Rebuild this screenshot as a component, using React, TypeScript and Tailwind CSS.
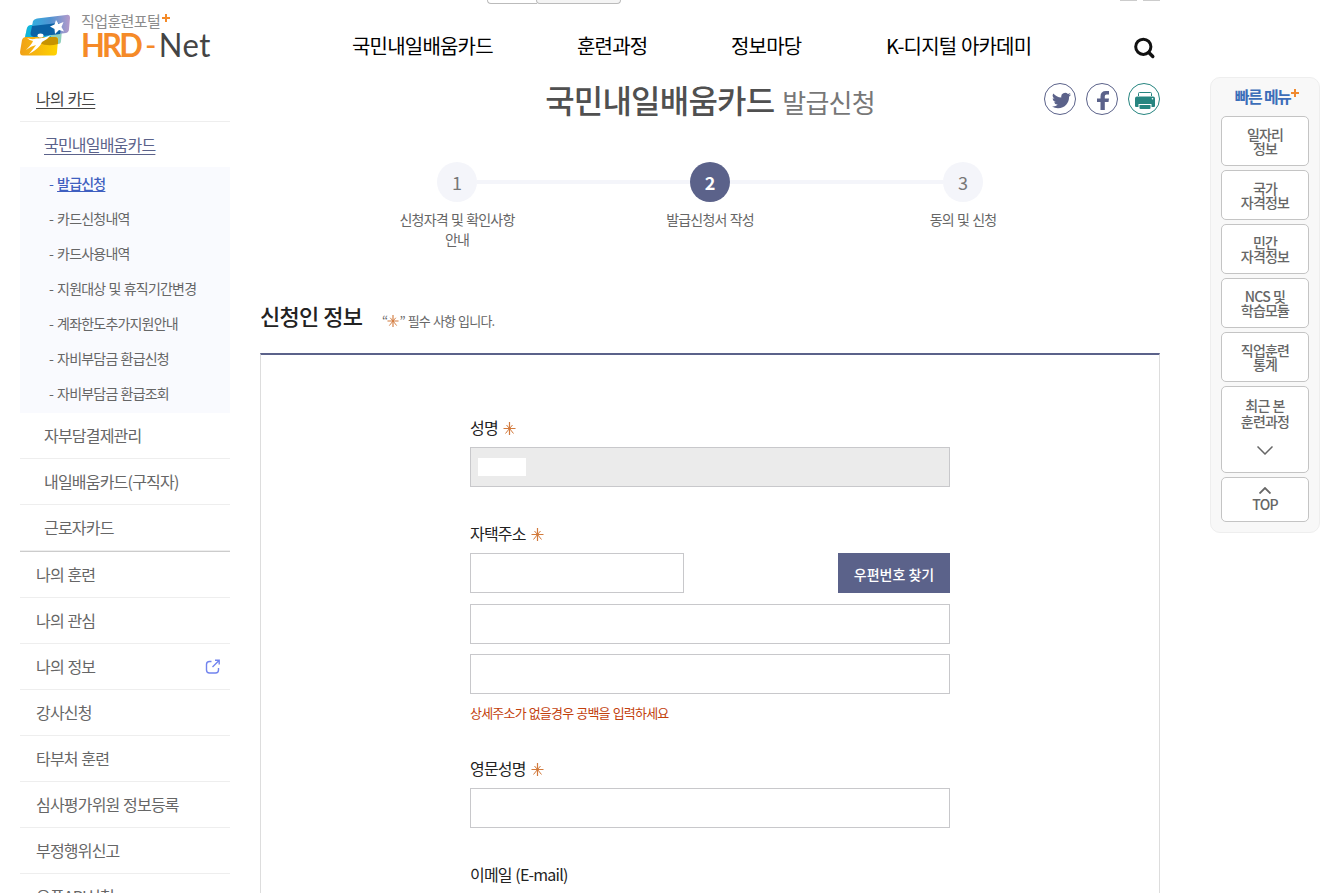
import React from "react";

const subMenu = [
  "발급신청",
  "카드신청내역",
  "카드사용내역",
  "지원대상 및 휴직기간변경",
  "계좌한도추가지원안내",
  "자비부담금 환급신청",
  "자비부담금 환급조회",
];

const cardMenu = ["자부담결제관리", "내일배움카드(구직자)", "근로자카드"];

const mainMenu = [
  { label: "나의 훈련" },
  { label: "나의 관심" },
  { label: "나의 정보", external: true },
  { label: "강사신청" },
  { label: "타부처 훈련" },
  { label: "심사평가위원 정보등록" },
  { label: "부정행위신고" },
  { label: "오픈API신청" },
];

const quickLinks = [
  ["일자리", "정보"],
  ["국가", "자격정보"],
  ["민간", "자격정보"],
  ["NCS 및", "학습모듈"],
  ["직업훈련", "통계"],
];

export default function App() {
  return (
    <div className="relative h-[893px] w-[1343px] overflow-hidden bg-white font-['Noto_Sans_CJK_KR','Noto_Sans',sans-serif] tracking-[-0.8px] text-[#666] [word-spacing:0.8px]">
      <TopTabs />
      <Header />
      <div className="flex items-start">
        <Sidebar />
        <Main />
        <QuickMenu />
      </div>
    </div>
  );
}

// bottom edge of the utility bar above the header
function TopTabs() {
  return (
    <>
      <div className="absolute left-[487px] top-0 flex h-1">
        <div className="w-[50px] rounded-bl border-b border-l border-[#bbb]" />
        <div className="-ml-px w-[85px] rounded-b border border-t-0 border-[#bbb] bg-[#f4f4f4]" />
      </div>
      <div className="absolute left-[1120px] top-0 flex gap-1.5">
        <div className="h-px w-[17px] bg-[#ccc]" />
        <div className="h-px w-[17px] bg-[#ccc]" />
      </div>
    </>
  );
}

function Header() {
  return (
    <header className="flex h-[77px] items-start pl-5 text-black">
      <Logo />
      <nav className="flex whitespace-nowrap pt-8 text-xl leading-7">
        <a className="ml-[141px] w-[225px]">국민내일배움카드</a>
        <a className="w-[154px]">훈련과정</a>
        <a className="w-[155px]">정보마당</a>
        <a className="w-[247px]">K-디지털 아카데미</a>
      </nav>
      <svg className="mt-9 h-6 w-6" viewBox="0 0 24 24" fill="none" stroke="#111" strokeWidth="3">
        <circle cx="10.3" cy="10.8" r="7.6" />
        <path d="M15.800 16.500l4 4" strokeLinecap="round" strokeWidth="3.4" />
      </svg>
    </header>
  );
}

function Logo() {
  return (
    <div className="relative flex h-[60px] w-[191px] shrink-0">
      <svg className="mt-3.5 h-[43px] w-[51px] shrink-0" viewBox="0 0 51 43">
        <defs>
          <linearGradient id="sky" x1="0" y1="0" x2="1" y2="0">
            <stop offset="0" stopColor="#2fb0e0" />
            <stop offset=".5" stopColor="#4f93d2" />
            <stop offset="1" stopColor="#b79aca" />
          </linearGradient>
          <linearGradient id="sun" x1="0" y1="0" x2="1" y2="0">
            <stop offset="0" stopColor="#f0a018" />
            <stop offset="1" stopColor="#ffd400" />
          </linearGradient>
        </defs>
        <path d="M7 14Q8 12 11 12L40 10Q43 12 42 16L41 27Q41 30 38 30L8 31Q4 31 4 28Z" fill="#8fd0bb" />
        <path d="M7 14Q8 11 11 11L28 9 32 28H4Z" fill="#11b5dc" />
        <path d="M13 7Q14 5 17 4.500L46 1Q50 0 50 4L49 15Q49 18 46 19L14 23Q9 22 11 17Z" fill="url(#sky)" />
        <path d="M12 12L38 9Q42 10 41 14L40 20 14 23Q9 22 11 17Z" fill="#0b62a5" />
        <path d="M2 26Q3 23 6 23L35 23Q38 23 38 26L37 38Q37 41.500 34 41.500H3Q0 41.500 0 38Z" fill="url(#sun)" />
        <path d="M18 23H35Q38 23 38 26V30Q28 33 19 29Z" fill="#c79300" />
        <path d="M36 6l2.500 4 5-2-2 5 2.500 4.500-5-1.500-4 4-.5-5-4.500-2.500 4.500-2z" fill="#fff" />
        <ellipse cx="20.500" cy="21.500" rx="3" ry="2" fill="#fff" />
        <path d="M7 24Q12 26 16 24.500Q22 25 31 21Q27 26 22 28Q20 34 9 40Q14 34 16 31Q11 32 6 36Q12 30 13 27Q10 27 7 24Z" fill="#fff" />
      </svg>
      <div className="ml-2.5 whitespace-nowrap">
        <div className="mt-[11px] text-[15px] leading-5 tracking-[-0.6px] text-[#8c8c8c]">직업훈련포털</div>
        <div className="-mt-[5px] flex origin-left scale-y-105 font-[Lato] text-[31px] leading-9">
          <b className="tracking-[-2.8px] text-[#f58a28]">HRD</b>
          <span className="ml-[5px] text-[#f58a28]">-</span>
          <span className="ml-[3px] tracking-[0.6px] text-[#444]">Net</span>
        </div>
      </div>
      <svg className="absolute left-[142px] top-3.5 h-2 w-2" viewBox="0 0 8 8" stroke="#f58a28" strokeWidth="2">
        <path d="M4 0v8M0 4h8" />
      </svg>
    </div>
  );
}

function Sidebar() {
  return (
    <aside className="ml-5 w-[210px] shrink-0 text-base">
      <div className="h-[45px] border-b border-[#eee] pl-4 leading-[43px] text-[#444] underline underline-offset-3">
        나의 카드
      </div>
      <div className="h-[45px] pl-6 leading-[45px] text-[#5b628a] underline underline-offset-3">국민내일배움카드</div>
      <ul className="h-[246px] bg-[#f9fafe] text-sm">
        {subMenu.map((item, i) => (
          <li key={item} className="flex h-[35px] gap-1 whitespace-nowrap pl-[29px] leading-[33px]">
            <span className={i === 0 ? "text-[#3f5fc0]" : ""}>-</span>
            <span className={i === 0 ? "font-medium text-[#3f5fc0] underline underline-offset-2" : ""}>{item}</span>
          </li>
        ))}
      </ul>
      <ul className="border-b border-[#ccc]">
        {cardMenu.map((item) => (
          <li key={item} className="h-[46px] border-b border-[#eee] pl-6 leading-[45px]">
            {item}
          </li>
        ))}
      </ul>
      <ul>
        {mainMenu.map((item) => (
          <li
            key={item.label}
            className="flex h-[46px] items-center justify-between whitespace-nowrap border-b border-[#eee] pb-0.5 pl-4 pr-2.5"
          >
            {item.label}
            {item.external && <ExternalIcon />}
          </li>
        ))}
      </ul>
    </aside>
  );
}

function ExternalIcon() {
  return (
    <svg className="mt-0.5 h-[15px] w-[15px]" viewBox="0 0 15 15" fill="none" stroke="#7284ee" strokeWidth="1.4">
      <path d="M6.500 2.500H4.500Q1.500 2.500 1.500 5.500v5.500q0 3 3 3h6q3 0 3-3V9" />
      <path d="M7.500 8l6-6M10 1.200H14.200V5.500" />
    </svg>
  );
}

function Main() {
  return (
    <main className="ml-[30px] w-[900px] shrink-0">
      <div className="relative flex h-12 justify-center">
        <h1 className="-mt-0.5 flex items-baseline gap-2 whitespace-nowrap leading-[48px]">
          <span className="text-[32px] font-medium text-[#505050]">국민내일배움카드</span>
          <span className="text-[26px] text-[#777]">발급신청</span>
        </h1>
        <ShareButtons />
      </div>
      <Steps />
      <div className="mt-12 flex h-[55px] items-start whitespace-nowrap">
        <h2 className="w-[122px] text-[22px] font-medium leading-[35px] text-[#222]">신청인 정보</h2>
        <p className="pt-2 text-[13px] leading-[30px]">
          “<Star small />” 필수 사항 입니다.
        </p>
      </div>
      <ApplicantForm />
    </main>
  );
}

function ShareButtons() {
  return (
    <div className="absolute right-0 top-1.5 flex gap-2.5">
      <a className="flex h-8 w-8 items-center justify-center rounded-full border border-[#5b628a]">
        <svg className="ml-[3px] mt-0.5 h-[19px] w-[19px]" viewBox="0 0 24 24" fill="#5b628a">
          <path d="M23.95 4.57a10 10 0 0 1-2.82.78 4.96 4.96 0 0 0 2.16-2.73c-.95.56-2 .96-3.13 1.18a4.92 4.92 0 0 0-8.38 4.48C7.69 8.1 4.07 6.13 1.64 3.16a4.92 4.92 0 0 0 1.52 6.57 4.9 4.9 0 0 1-2.23-.61v.06a4.92 4.92 0 0 0 3.95 4.83 5 5 0 0 1-2.21.08 4.94 4.94 0 0 0 4.6 3.42A9.87 9.87 0 0 1 0 19.54a14 14 0 0 0 7.55 2.21c9.05 0 14-7.5 14-13.98 0-.21 0-.42-.02-.63a9.94 9.94 0 0 0 2.46-2.55z" />
        </svg>
      </a>
      <a className="flex h-8 w-8 items-center justify-center rounded-full border border-[#5b628a]">
        <svg className="ml-0.5 mt-0.5 h-[19px] w-3" viewBox="0 0 12 19" fill="#5b628a">
          <path d="M3.500 19V11H0V7.500h3.500V5.500q0-5.500 5.500-5.500h3v3.500H9.500Q7.800 3.500 7.800 5.200v2.300H12L11.500 11H7.800v8z" />
        </svg>
      </a>
      <a className="flex h-8 w-8 items-center justify-center rounded-full border border-[#268580]">
        <svg className="ml-0.5 mt-0.5 h-[17px] w-5" viewBox="0 0 20 17" fill="#268580">
          <path d="M3.500 4V1.500Q3.500.5 4.500.5h11q1 0 1 1V4" fill="none" stroke="#268580" />
          <path d="M2 4.500h16q2 0 2 2V14q0 1-1 1h-2.500v-3h-13v3H1q-1 0-1-1V6.500q0-2 2-2z" />
          <path d="M4.500 13h11v3q0 1-1 1h-9q-1 0-1-1z" />
          <circle cx="17.500" cy="6.800" r=".8" fill="#fff" />
        </svg>
      </a>
    </div>
  );
}

function Steps() {
  return (
    <ol className="mt-[37px] flex h-[88px] justify-center text-center text-sm leading-5">
      <Step no={1} after>
        신청자격 및 확인사항
        <br />
        안내
      </Step>
      <Step no={2} before after active>
        발급신청서 작성
      </Step>
      <Step no={3} before>
        동의 및 신청
      </Step>
    </ol>
  );
}

interface StepProps {
  no: number;
  before?: boolean;
  after?: boolean;
  active?: boolean;
  children: React.ReactNode;
}

function Step({ no, before, after, active, children }: StepProps) {
  return (
    <li className="w-[253px]">
      <div className="mb-[7px] flex items-center">
        <div className={`h-1 flex-1 ${before ? "bg-[#f4f5fa]" : ""}`} />
        <div
          className={`h-10 w-10 rounded-full text-lg leading-10 tracking-normal ${
            active ? "bg-[#5b628a] font-bold text-white" : "bg-[#f4f5fa] text-[#777]"
          }`}
        >
          {no}
        </div>
        <div className={`h-1 flex-1 ${after ? "bg-[#f4f5fa]" : ""}`} />
      </div>
      {children}
    </li>
  );
}

function Star({ small }: { small?: boolean }) {
  return (
    <svg
      className={small ? "-mt-0.5 inline h-3 w-3" : "-ml-px mt-0.5 inline h-[13px] w-[13px]"}
      viewBox="0 0 13 13"
      stroke="#d27a3c"
      strokeWidth="1.2"
    >
      <path d="M6.500 0v13M.5 6.500h12" />
      <path d="M2.500 11.500l4-5 4 5M3.500 3l3 3.500 3-3.500" fill="none" strokeWidth="1" />
    </svg>
  );
}

function Label({ children, required }: { children: string; required?: boolean }) {
  return (
    <div className="flex h-10 items-center gap-1.5 text-base text-[#222]">
      {children}
      {required && <Star />}
    </div>
  );
}

function ApplicantForm() {
  return (
    <section className="h-[560px] border border-t-2 border-[#ddd] border-t-[#5b628a] px-[209px] pt-[52px]">
      <Label required>성명</Label>
      <div className="h-10 border border-[#c8c8cb] bg-[#ebebeb] px-[7px] py-2.5">
        <div className="h-[18px] w-12 bg-white" />
      </div>
      <div className="mt-[26px]">
        <Label required>자택주소</Label>
      </div>
      <div className="flex justify-between">
        <div className="h-10 w-[214px] border border-[#c8c8cb]" />
        <button className="h-10 w-28 bg-[#5b628a] pt-px text-sm font-medium tracking-normal text-white">
          우편번호 찾기
        </button>
      </div>
      <div className="mt-[11px] h-10 border border-[#c8c8cb]" />
      <div className="mt-2.5 h-10 border border-[#c8c8cb]" />
      <p className="mt-2 h-[22px] text-[13px] leading-[22px] text-[#c2410c]">상세주소가 없을경우 공백을 입력하세요</p>
      <div className="mt-6">
        <Label required>영문성명</Label>
      </div>
      <div className="h-10 border border-[#c8c8cb]" />
      <div className="mt-[26px]">
        <Label>이메일 (E-mail)</Label>
      </div>
    </section>
  );
}

function QuickMenu() {
  return (
    <aside className="ml-[50px] flex h-[456px] w-[110px] shrink-0 flex-col gap-1 rounded-[10px] border border-[#eee] bg-[#f8f8f8] px-2.5 text-center text-sm font-medium leading-[14px] text-[#666]">
      <div className="flex h-[34px] justify-center pl-1 pt-[11px] text-[#3c6eb9]">
        <strong className="text-base leading-[14px] tracking-[-1.6px]">빠른 메뉴</strong>
        <svg className="ml-px h-2 w-2" viewBox="0 0 8 8" stroke="#f08a30" strokeWidth="2">
          <path d="M4 0v8M0 4h8" />
        </svg>
      </div>
      {quickLinks.map(([first, second]) => (
        <a key={first} className="h-[50px] rounded-[5px] border border-[#c4c4c4] bg-white pt-2.5">
          {first}
          <br />
          {second}
        </a>
      ))}
      <a className="flex h-[87px] flex-col items-center rounded-[5px] border border-[#c4c4c4] bg-white pt-2.5 leading-4">
        <span>최근 본</span>
        <span>훈련과정</span>
        <svg className="mt-[17px] h-[9px] w-4" viewBox="0 0 16 9" fill="none" stroke="#666" strokeWidth="1.500">
          <path d="M.5.5L8 8 15.500.5" />
        </svg>
      </a>
      <a className="flex h-[45px] flex-col items-center rounded-[5px] border border-[#c4c4c4] bg-white pt-[9px]">
        <svg className="mb-[3px] h-[7px] w-3" viewBox="0 0 12 7" fill="none" stroke="#666" strokeWidth="1.800">
          <path d="M.5 6.500L6 1l5.500 5.500" />
        </svg>
        TOP
      </a>
    </aside>
  );
}
